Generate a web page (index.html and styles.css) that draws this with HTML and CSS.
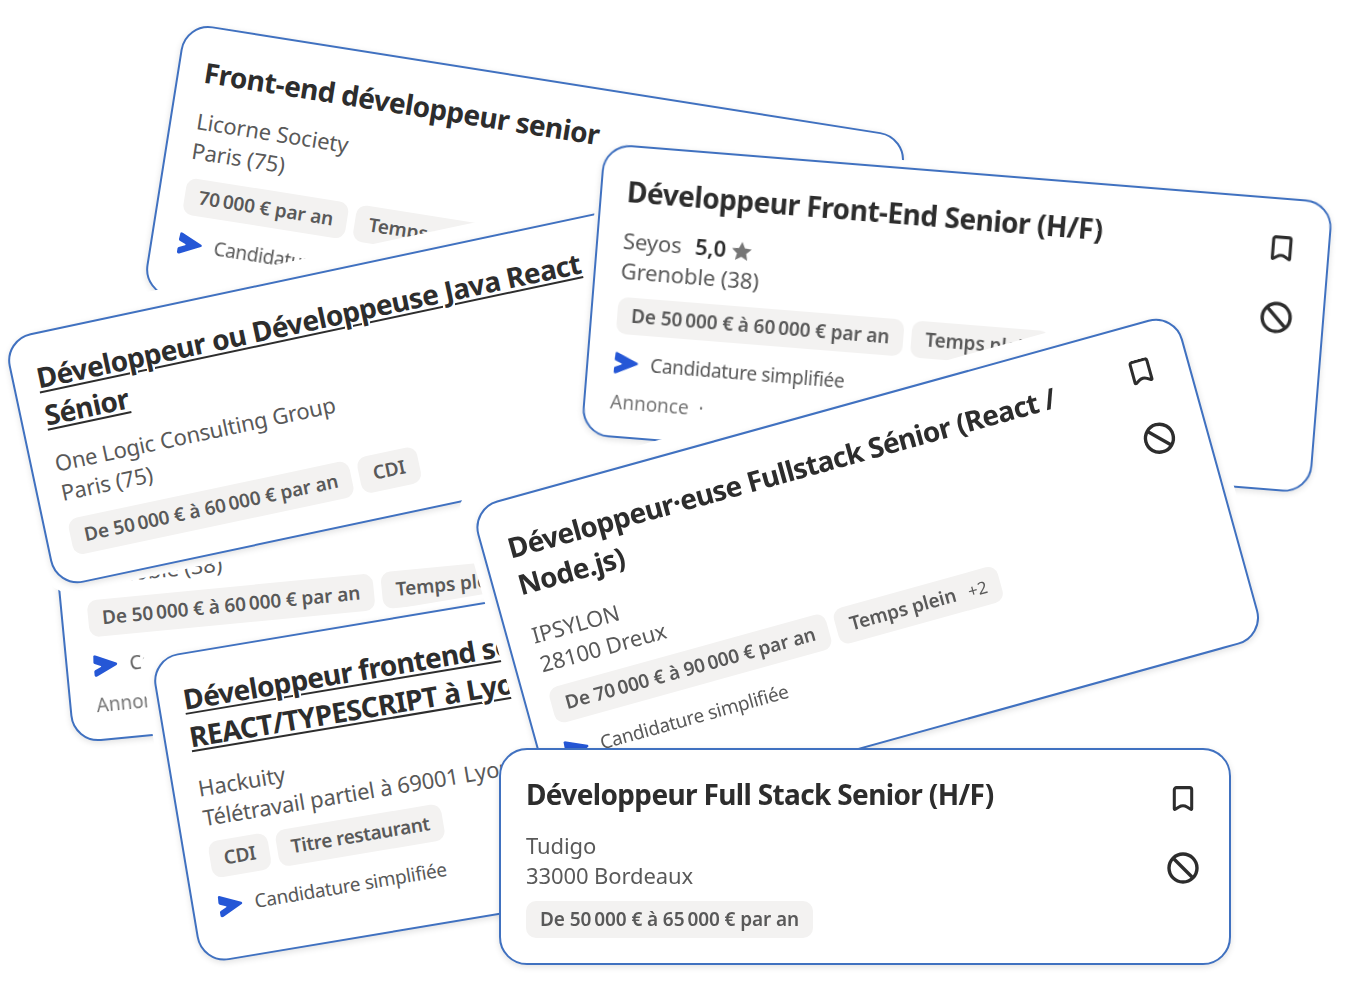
FILE: index.html
```html
<!DOCTYPE html>
<html lang="fr">
<head>
<meta charset="utf-8">
<title>Offres d'emploi</title>
<link rel="stylesheet" href="styles.css">
</head>
<body>
<svg class="defs" width="0" height="0" aria-hidden="true">
  <symbol id="bookmark" viewBox="1 1 20 23"><path d="M3 4.500c0-1.100.9-2 2-2h12c1.100 0 2 .9 2 2v17.400c0 .5-.5.7-.9.5l-3.400-2.100c-1.100-.7-2.200-1.100-3.700-1.100s-2.600.4-3.700 1.100l-3.400 2.100c-.4.200-.9 0-.9-.5z" fill="none" stroke="currentColor" stroke-width="2.800" stroke-linejoin="round"/></symbol>
  <symbol id="block" viewBox="0 0 32 32"><circle cx="16" cy="16" r="14" fill="none" stroke="currentColor" stroke-width="3.400"/><path d="M6 6l20 20" fill="none" stroke="currentColor" stroke-width="3.400"/></symbol>
  <symbol id="apply" viewBox="0 0 25 22"><path d="M1.500.8c.3-.6.9-.8 1.500-.6l20.800 9.200c1.100.5 1.100 1.900 0 2.400L3.500 21.600c-1.200.5-2.500-.4-2.500-1.700v-3.300c0-.7.400-1.200 1-1.500l6-2.700c.5-.2.500-.9 0-1.100L2 8.800c-.6-.3-1-.8-1-1.500z" fill="currentColor"/></symbol>
</svg>
<main class="stage">

  <section class="sheet sheet-licorne">
    <article class="card">
      <div class="card-body">
        <h2 class="title">Front-end développeur senior</h2>
        <p class="line company">Licorne Society</p>
        <p class="line">Paris (75)</p>
        <div class="chips"><span class="chip">70&#8239;000 € par an</span><span class="chip">Temps plein</span></div>
        <p class="apply"><svg class="apply-icon"><use href="#apply"/></svg>Candidature simplifiée</p>
      </div>
    </article>
  </section>

  <section class="sheet sheet-grenoble">
    <article class="card">
      <div class="card-body">
        <h2 class="title">Développeur Front-End Senior</h2>
        <p class="line company">Seyos</p>
        <p class="line">Grenoble (38)</p>
        <div class="chips"><span class="chip">De 50&#8239;000 € à 60&#8239;000 € par an</span><span class="chip">Temps plein</span></div>
        <p class="apply"><svg class="apply-icon"><use href="#apply"/></svg>Candidature simplifiée</p>
        <p class="ad">Annonce</p>
      </div>
    </article>
  </section>

  <section class="sheet sheet-java">
    <article class="card">
      <div class="card-body">
        <h2 class="title title-link">Développeur ou Développeuse Java React<br>Sénior</h2>
        <p class="line company">One Logic Consulting Group</p>
        <p class="line">Paris (75)</p>
        <div class="chips"><span class="chip">De 50&#8239;000 € à 60&#8239;000 € par an</span><span class="chip">CDI</span></div>
      </div>
    </article>
  </section>

  <section class="sheet sheet-seyos">
    <article class="card">
      <div class="card-body">
        <h2 class="title">Développeur Front-End Senior (H/F)</h2>
        <p class="line company">Seyos <b class="rating">5,0</b><svg class="star" viewBox="0 0 24 24"><path d="M12 1.500l3.200 7 7.600.800-5.700 5.100 1.600 7.500L12 18l-6.700 3.900 1.600-7.500L1.200 9.300l7.600-.800z"/></svg></p>
        <p class="line">Grenoble (38)</p>
        <div class="chips"><span class="chip">De 50&#8239;000 € à 60&#8239;000 € par an</span><span class="chip">Temps plein</span></div>
        <p class="apply"><svg class="apply-icon"><use href="#apply"/></svg>Candidature simplifiée</p>
        <p class="ad">Annonce &nbsp;·</p>
      </div>
      <div class="actions">
        <svg class="icon-bookmark"><use href="#bookmark"/></svg>
        <svg class="icon-block"><use href="#block"/></svg>
      </div>
    </article>
  </section>

  <section class="sheet sheet-hackuity">
    <article class="card">
      <div class="card-body">
        <h2 class="title title-link">Développeur frontend senior<br>REACT/TYPESCRIPT à Lyon</h2>
        <p class="line company">Hackuity</p>
        <p class="line">Télétravail partiel à 69001 Lyon</p>
        <div class="chips"><span class="chip">CDI</span><span class="chip">Titre restaurant</span></div>
        <p class="apply"><svg class="apply-icon"><use href="#apply"/></svg>Candidature simplifiée</p>
      </div>
    </article>
  </section>

  <section class="sheet sheet-ipsylon">
    <article class="card">
      <div class="card-body">
        <h2 class="title">Développeur·euse Fullstack Sénior (React /<br>Node.js)</h2>
        <p class="line company">IPSYLON</p>
        <p class="line">28100 Dreux</p>
        <div class="chips"><span class="chip">De 70&#8239;000 € à 90&#8239;000 € par an</span><span class="chip">Temps plein <span class="more">+2</span></span></div>
        <p class="apply"><svg class="apply-icon"><use href="#apply"/></svg>Candidature simplifiée</p>
      </div>
      <div class="actions">
        <svg class="icon-bookmark"><use href="#bookmark"/></svg>
        <svg class="icon-block"><use href="#block"/></svg>
      </div>
    </article>
  </section>

  <section class="sheet sheet-tudigo">
    <article class="card">
      <div class="card-body">
        <h2 class="title">Développeur Full Stack Senior (H/F)</h2>
        <p class="line company">Tudigo</p>
        <p class="line">33000 Bordeaux</p>
        <div class="chips"><span class="chip">De 50&#8239;000 € à 65&#8239;000 € par an</span></div>
      </div>
      <div class="actions">
        <svg class="icon-bookmark"><use href="#bookmark"/></svg>
        <svg class="icon-block"><use href="#block"/></svg>
      </div>
    </article>
  </section>

</main>
</body>
</html>
```

FILE: styles.css
```css
* { box-sizing: border-box; }
html, body { margin: 0; padding: 0; background: #fff; }
.defs { position: absolute; }
.stage {
  position: relative;
  width: 1345px;
  height: 998px;
  overflow: hidden;
  font-family: "Noto Sans", sans-serif;
  color: #595959;
  filter: blur(0.35px);
}

/* each sheet is a cut-out pinned on the free canvas by its top-left corner */
.sheet {
  position: absolute;
  width: 732px;
  transform-origin: 0 0;
}
.sheet::before {
  content: "";
  position: absolute;
  top: -16px;
  left: -10px;
  right: -10px;
  bottom: -8px;
  background: #fff;
  border-radius: 30px;
  z-index: -1;
}
.sheet-licorne  { left: 185px; top: 22px;  height: 274px; transform: rotate(9deg); }
.sheet-grenoble { left: 45px;  top: 452px; height: 293px; transform: rotate(-5.5deg); }
.sheet-java     { left: 3px;   top: 339px; height: 255px; transform: rotate(-12deg); }
.sheet-seyos    { left: 604px; top: 143px; height: 293px; transform: rotate(4.6deg); }
.sheet-hackuity { left: 150px; top: 658px; width: 700px; height: 311px; transform: rotate(-9.5deg); }
.sheet-ipsylon  { left: 470px; top: 508px; height: 337px; transform: rotate(-15.5deg); }
.sheet-tudigo   { left: 499px; top: 748px; height: 217px; }
.sheet-seyos::before { top: -7px; left: -4px; right: -8px; }
.sheet-hackuity::before { top: -8px; border-radius: 18px; }
.sheet-ipsylon::before { top: -15px; left: -11px; border-radius: 18px; }
.sheet-tudigo::before { top: -6px; left: -7px; right: -7px; bottom: -6px; }

.card {
  position: relative;
  display: flex;
  justify-content: space-between;
  height: 100%;
  padding: 25px 27px 27px 25px;
  background: #fff;
  border: 2px solid #4071c0;
  border-radius: 28px;
  box-shadow: 0 2px 6px rgba(0, 0, 0, 0.12);
}
.sheet-java .card { padding: 24px 27px 27px 23px; }
.sheet-grenoble .card { padding-top: 24px; }
.sheet-hackuity .card { padding-left: 24px; }
.sheet-ipsylon .card { padding: 28px 27px 27px 24px; }
.card-body { min-width: 0; }
.title {
  margin: 0 0 18px;
  font-size: 28px;
  line-height: 38px;
  font-weight: 700;
  letter-spacing: -0.65px;
  color: #2d2d2d;
  white-space: nowrap;
}
.sheet-licorne .title { margin-bottom: 15px; letter-spacing: -0.5px; }
.sheet-java .title { margin-bottom: 15px; letter-spacing: -0.55px; }
.sheet-seyos .title { margin-bottom: 15px; letter-spacing: -0.45px; }
.sheet-tudigo .title { margin-bottom: 17px; }
.title-link { text-decoration: underline; text-underline-offset: 3px; text-decoration-thickness: 2px; }
.line {
  margin: 0;
  font-size: 22px;
  line-height: 30px;
  letter-spacing: -0.1px;
  white-space: nowrap;
}
.sheet-java .line, .sheet-hackuity .line { letter-spacing: -0.2px; }
.rating { margin-left: 8px; font-weight: 600; color: #2d2d2d; }
.star { width: 22px; height: 22px; margin-left: 5px; fill: #767676; vertical-align: -4px; }
.chips { display: flex; gap: 8px; margin-top: 10px; }
.sheet-tudigo .chips, .sheet-ipsylon .chips { margin-top: 11px; }
.sheet-licorne .chips, .sheet-java .chips { margin-top: 13px; }
.sheet-seyos .chips { margin-top: 12px; }
.chip {
  display: block;
  height: 37px;
  padding: 0 14px;
  background: #f3f2f1;
  border-radius: 10px;
  font-size: 19px;
  line-height: 37px;
  font-weight: 600;
  letter-spacing: -0.1px;
  white-space: nowrap;
}
.sheet-hackuity .chip { letter-spacing: -0.35px; }
.more { margin-left: 8px; font-weight: 400; font-size: 17px; }
.apply {
  display: flex;
  align-items: center;
  gap: 12px;
  height: 30px;
  margin: 14px 0 0;
  font-size: 19px;
  letter-spacing: -0.3px;
  white-space: nowrap;
}
.apply-icon { width: 25px; height: 22px; color: #2557d6; }
.ad { margin: 9px 0 0; font-size: 19px; line-height: 30px; color: #767676; }
.actions {
  display: flex;
  flex-direction: column;
  align-items: center;
  flex: none;
  width: 34px;
  gap: 41px;
  margin: 11px 2px 0 0;
  color: #2d2d2d;
}
.sheet-ipsylon .actions { gap: 41px; margin: 5px 3px 0 0; }
.icon-bookmark { width: 22px; height: 25px; }
.icon-block { width: 32px; height: 32px; }
```
